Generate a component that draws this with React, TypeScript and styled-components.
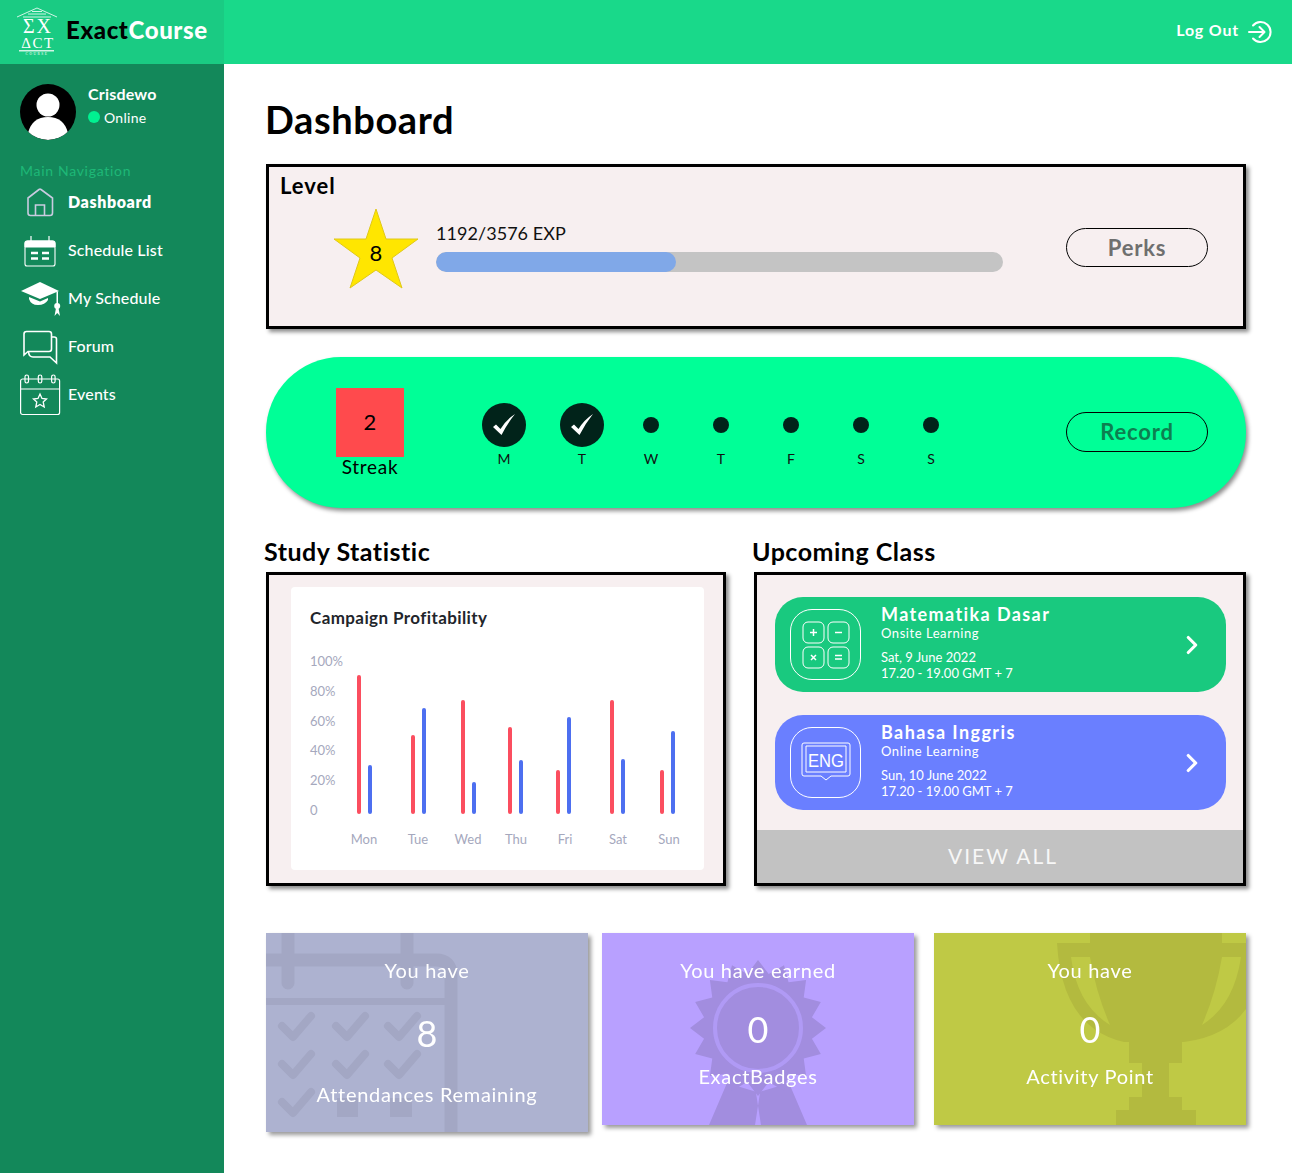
import React from "react";
import styled, { createGlobalStyle } from "styled-components";
import { ChevronRight } from "lucide-react";

const GlobalStyle = createGlobalStyle`
  html, body {
    margin: 0;
    padding: 0;
    background: #ffffff;
    font-family: "Lato", "Noto Sans", sans-serif;
  }
  * {
    box-sizing: border-box;
  }
`;

const navItems = [
  { label: "Dashboard", icon: "home", active: true },
  { label: "Schedule List", icon: "calendar" },
  { label: "My Schedule", icon: "cap" },
  { label: "Forum", icon: "forum" },
  { label: "Events", icon: "events" },
];

const days = [
  { label: "M", done: true, width: 88 },
  { label: "T", done: true, width: 68 },
  { label: "W", width: 70 },
  { label: "T", width: 70 },
  { label: "F", width: 70 },
  { label: "S", width: 70 },
  { label: "S", width: 70 },
];

const bars = [
  { day: "Mon", labelX: 73, redX: 68, redTop: 88, blueX: 79, blueTop: 178 },
  { day: "Tue", labelX: 127, redX: 122, redTop: 148, blueX: 133, blueTop: 121 },
  { day: "Wed", labelX: 177, redX: 172, redTop: 113, blueX: 183, blueTop: 195 },
  { day: "Thu", labelX: 225, redX: 219, redTop: 140, blueX: 230, blueTop: 173 },
  { day: "Fri", labelX: 274, redX: 267, redTop: 183, blueX: 278, blueTop: 130 },
  { day: "Sat", labelX: 327, redX: 321, redTop: 113, blueX: 332, blueTop: 172 },
  { day: "Sun", labelX: 378, redX: 371, redTop: 183, blueX: 382, blueTop: 144 },
];

const yTicks = [
  { label: "100%", y: 79 },
  { label: "80%", y: 109 },
  { label: "60%", y: 139 },
  { label: "40%", y: 168 },
  { label: "20%", y: 198 },
  { label: "0", y: 228 },
];

function NavIcon({ name }: { name: string }) {
  if (name === "home") {
    return (
      <svg width="44" height="36" viewBox="0 0 44 36" fill="none" stroke="#c9cbe0" strokeWidth="1.6">
        <path d="M8 13 L19 4.500 Q20 3.800 21 4.500 L32.500 13 V28 Q32.500 30.500 30 30.500 H10.500 Q8 30.500 8 28 Z" />
        <path d="M15.500 30.500 V20 H24.500 V30.500" />
      </svg>
    );
  }
  if (name === "calendar") {
    return (
      <svg width="44" height="36" viewBox="0 0 44 36" fill="none" stroke="#ffffff">
        <path d="M11 3 V9 M29 3 V9" strokeWidth="1.200" />
        <path d="M5 10.500 Q5 8 7.500 8 H32.500 Q35 8 35 10.500 V14 H5 Z" fill="#ffffff" strokeWidth="1" />
        <rect x="5" y="8" width="30" height="25" rx="2" strokeWidth="1.100" />
        <path d="M11 20 H18 M22 20 H29 M11 25.500 H18 M22 25.500 H29" strokeWidth="2.600" />
      </svg>
    );
  }
  if (name === "cap") {
    return (
      <svg width="44" height="36" viewBox="0 0 44 36" fill="#ffffff">
        <path d="M1 10 L20 1 L39 10 L20 18 Z" />
        <path d="M9 16 L20 20.500 L28 17 V19 Q25 24 18 24 Q11 24 9 18 Z" />
        <path d="M36.500 10.500 H38 V23 H36.500 Z" />
        <circle cx="37.200" cy="25" r="3" />
        <path d="M36 27 L34.500 35 L37.200 32 L40 35 L38.500 27 Z" />
      </svg>
    );
  }
  if (name === "forum") {
    return (
      <svg width="44" height="36" viewBox="0 0 44 36" fill="none" stroke="#ffffff" strokeWidth="1.600">
        <path d="M4 26 V5 Q4 2.500 6.500 2.500 H29 Q31.500 2.500 31.500 5 V20 Q31.500 22.500 29 22.500 H8 Z" />
        <path d="M32 8 H34 Q36.500 8 36.500 10 V34 L30 28 H13 Q9 28 8.500 23" />
      </svg>
    );
  }
  return (
    <svg width="44" height="42" viewBox="0 0 44 42" fill="none" stroke="#ffffff" strokeWidth="1.200">
      <rect x="0.600" y="5" width="39" height="35.500" rx="2" />
      <path d="M0.600 15 H39.600" />
      <rect x="5" y="1" width="3.500" height="8" rx="1.700" />
      <rect x="18.300" y="1" width="3.500" height="8" rx="1.700" />
      <rect x="31.600" y="1" width="3.500" height="8" rx="1.700" />
      <path d="M20 20 L22 24.500 L26.500 25 L23.200 28 L24.200 33 L20 30.500 L15.800 33 L16.800 28 L13.500 25 L18 24.500 Z" strokeWidth="1.300" />
    </svg>
  );
}

function Logo() {
  return (
    <svg width="44" height="50" viewBox="0 0 44 50">
      <path d="M1 10 L21 1 L41 10 M7 10 H35 M12 7 H30 M16 4.500 H26" stroke="#ffffff" strokeWidth="0.800" fill="none" />
      <LogoText x="22" y="26" fontSize="20" letterSpacing="2">ΣX</LogoText>
      <LogoText x="22" y="41" fontSize="15" letterSpacing="1.500">ΔCΤ</LogoText>
      <rect x="3" y="43" width="35" height="1.500" fill="#ffffff" opacity="0.800" />
      <LogoText x="21" y="48" fontSize="3.500" letterSpacing="1.500">COURSE</LogoText>
    </svg>
  );
}

function LogOutIcon() {
  return (
    <svg width="24" height="24" viewBox="0 0 24 24" fill="none" stroke="#ffffff" strokeWidth="2" strokeLinecap="round" strokeLinejoin="round">
      <path d="M5 5.500 A10 10 0 1 1 5 18.500" />
      <path d="M1 12 H16 M11.500 7 L16.500 12 L11.500 17" />
    </svg>
  );
}

function Check() {
  return (
    <svg width="24" height="24" viewBox="0 0 24 24" fill="#ffffff">
      <path d="M1 14 L4 11.500 L8.500 16 Q14 7 23 1 Q15 11 9.500 22 Z" />
    </svg>
  );
}

function MathIcon() {
  return (
    <svg width="48" height="48" viewBox="0 0 48 48" fill="none" stroke="#ffffff" strokeWidth="1">
      <rect x="1" y="1" width="21" height="21" rx="5" />
      <rect x="26" y="1" width="21" height="21" rx="5" />
      <rect x="1" y="26" width="21" height="21" rx="5" />
      <rect x="26" y="26" width="21" height="21" rx="5" />
      <g strokeWidth="1.500">
        <path d="M8 11.500 H15 M11.500 8 V15" />
        <path d="M33 11.500 H40" />
        <path d="M9 34 L14 39 M14 34 L9 39" />
        <path d="M33 34.500 H40 M33 38 H40" />
      </g>
    </svg>
  );
}

function EngIcon() {
  return (
    <svg width="50" height="42" viewBox="0 0 50 42" fill="none" stroke="#ffffff" strokeWidth="1">
      <path d="M3 1 H47 Q49 1 49 3 V32 Q49 34 47 34 H30 L25 38 L20 34 H3 Q1 34 1 32 V3 Q1 1 3 1 Z" />
      <path d="M5 4 H45 V30 H5 Z" />
      <EngText x="25" y="25" fontSize="19" textLength="36" lengthAdjust="spacingAndGlyphs">ENG</EngText>
    </svg>
  );
}

function CalendarMark() {
  const cols = [12, 66, 118];
  const rows = [
    { y: 79, cols },
    { y: 117, cols },
    { y: 155, cols: [12] },
  ];
  return (
    <Watermark width="322" height="199" viewBox="0 0 322 199" fill="none" stroke="#a3a7c4">
      <path d="M-10 27 H170 Q185 27 185 42 V210" strokeWidth="13" />
      <path d="M22 -10 V50 M141 -10 V50" strokeWidth="13" strokeLinecap="round" />
      <path d="M-10 68.500 H185" strokeWidth="7" />
      {rows.map((row) =>
        row.cols.map((x) => (
          <path
            key={`${x}-${row.y}`}
            d={`M${x + 4} ${row.y + 14} L${x + 15} ${row.y + 25} L${x + 33} ${row.y + 4}`}
            strokeWidth="8"
            strokeLinecap="round"
            strokeLinejoin="round"
          />
        ))
      )}
      <rect x="71" y="165" width="21" height="19" fill="#a3a7c4" stroke="none" />
      <rect x="124" y="165" width="22" height="19" fill="#a3a7c4" stroke="none" />
    </Watermark>
  );
}

function BadgeMark() {
  const points: string[] = [];
  for (let i = 0; i < 32; i++) {
    const angle = (Math.PI * i) / 16 - Math.PI / 2;
    const radius = i % 2 === 0 ? 68 : 55;
    points.push(`${156 + radius * Math.cos(angle)},${95 + radius * Math.sin(angle)}`);
  }
  return (
    <Watermark width="312" height="192" viewBox="0 0 312 192">
      <path d="M125 150 L107 192 H153 L158 160 Z M187 150 L205 192 H159 L154 160 Z" fill="#a28ddf" />
      <polygon points={points.join(" ")} fill="#a28ddf" />
      <circle cx="156" cy="95" r="43" fill="none" stroke="#b09af5" strokeWidth="4" />
    </Watermark>
  );
}

function TrophyMark() {
  return (
    <Watermark width="312" height="192" viewBox="0 0 312 192" fill="#b3ba3f">
      <path d="M123 10 H156 V0 H288 V10 H330 V24 Q322 100 250 109 H248 V130 H235 V164 H248 V177 H262 V192 H182 V177 H195 V164 H208 V130 H195 V109 H190 Q128 95 123 10 Z M137 24 Q143 72 176 92 Q162 60 156 24 Z M307 24 H288 Q282 60 268 92 Q300 72 307 24 Z" fillRule="evenodd" />
    </Watermark>
  );
}

export default function App() {
  return (
    <>
      <GlobalStyle />
      <Page>
        <Header>
          <Brand>
            <Logo />
            <BrandName>
              Exact<BrandAccent>Course</BrandAccent>
            </BrandName>
          </Brand>
          <LogOutLink>
            <LogOutText>Log Out</LogOutText>
            <LogOutIcon />
          </LogOutLink>
        </Header>
        <Body>
          <Sidebar>
            <Profile>
              <Avatar>
                <svg width="56" height="56" viewBox="0 0 56 56" fill="#ffffff">
                  <circle cx="28" cy="21" r="11.500" />
                  <path d="M8 49 Q12 33 28 33 Q44 33 48 49 Q38 56 28 56 Q18 56 8 49 Z" />
                </svg>
              </Avatar>
              <ProfileInfo>
                <ProfileName>Crisdewo</ProfileName>
                <ProfileStatus>
                  <StatusDot />
                  Online
                </ProfileStatus>
              </ProfileInfo>
            </Profile>
            <NavTitle>Main Navigation</NavTitle>
            <NavList>
              {navItems.map((item) => (
                <NavRow key={item.label}>
                  <NavIconSlot>
                    <NavIcon name={item.icon} />
                  </NavIconSlot>
                  <NavLabel $active={item.active}>{item.label}</NavLabel>
                </NavRow>
              ))}
            </NavList>
          </Sidebar>
          <Main>
            <PageTitle>Dashboard</PageTitle>
            <LevelCard>
              <LevelTitle>Level</LevelTitle>
              <LevelRow>
                <StarBox>
                  <svg width="86" height="82" viewBox="0 0 86 82">
                    <polygon
                      points="43,1 53,31 85,31 59,50 69,80 43,62 17,80 27,50 1,31 33,31"
                      fill="#ffe600"
                      stroke="#e0c81a"
                      strokeWidth="1"
                    />
                  </svg>
                  <StarNumber>8</StarNumber>
                </StarBox>
                <Progress>
                  <ProgressText>1192/3576 EXP</ProgressText>
                  <ProgressTrack>
                    <ProgressFill style={{ width: `${(1192 / 2816) * 100}%` }} />
                  </ProgressTrack>
                </Progress>
                <OutlineButton $color="#6f6f6f">Perks</OutlineButton>
              </LevelRow>
            </LevelCard>

            <StreakCard>
              <StreakBox>
                <StreakCount>2</StreakCount>
                <StreakLabel>Streak</StreakLabel>
              </StreakBox>
              <DayList>
                {days.map((day, index) => (
                  <DayItem key={index} $width={day.width}>
                    <DayMark>{day.done ? <DayCircle><Check /></DayCircle> : <DayDot />}</DayMark>
                    <DayLabel>{day.label}</DayLabel>
                  </DayItem>
                ))}
              </DayList>
              <OutlineButton $color="#0d7f50">Record</OutlineButton>
            </StreakCard>

            <Columns>
              <Column>
                <SectionTitle $shift={-2}>Study Statistic</SectionTitle>
                <FramedCard>
                  <ChartPanel>
                    <svg width="413" height="283" viewBox="0 0 413 283">
                      <ChartTitle x="19" y="37">Campaign Profitability</ChartTitle>
                      {yTicks.map((tick) => (
                        <ChartLabel key={tick.label} x="19" y={tick.y}>{tick.label}</ChartLabel>
                      ))}
                      {bars.map((bar) => (
                        <g key={bar.day}>
                          <rect x={bar.redX - 2} y={bar.redTop} width="4" height={227 - bar.redTop} rx="2" fill="#fb4e5f" />
                          <rect x={bar.blueX - 2} y={bar.blueTop} width="4" height={227 - bar.blueTop} rx="2" fill="#4d6ff0" />
                          <ChartLabel x={bar.labelX} y="257" textAnchor="middle">{bar.day}</ChartLabel>
                        </g>
                      ))}
                    </svg>
                  </ChartPanel>
                </FramedCard>
              </Column>
              <Column>
                <SectionTitle $shift={-2}>Upcoming Class</SectionTitle>
                <FramedCard>
                  <ClassList>
                    <ClassCard $color="#19c97f">
                      <ClassIcon><MathIcon /></ClassIcon>
                      <ClassInfo>
                        <ClassName>Matematika Dasar</ClassName>
                        <ClassType>Onsite Learning</ClassType>
                        <ClassTime>Sat, 9 June 2022</ClassTime>
                        <ClassTime>17.20 - 19.00 GMT + 7</ClassTime>
                      </ClassInfo>
                      <ChevronRight color="#ffffff" size={30} strokeWidth={2.500} />
                    </ClassCard>
                    <ClassCard $color="#6a7fff">
                      <ClassIcon><EngIcon /></ClassIcon>
                      <ClassInfo>
                        <ClassName>Bahasa Inggris</ClassName>
                        <ClassType>Online Learning</ClassType>
                        <ClassTime>Sun, 10 June 2022</ClassTime>
                        <ClassTime>17.20 - 19.00 GMT + 7</ClassTime>
                      </ClassInfo>
                      <ChevronRight color="#ffffff" size={30} strokeWidth={2.500} />
                    </ClassCard>
                  </ClassList>
                  <ViewAll>VIEW ALL</ViewAll>
                </FramedCard>
              </Column>
            </Columns>

            <StatRow>
              <StatCard $width={322} $height={199} $color="#adb2d0">
                <CalendarMark />
                <StatLabel>You have</StatLabel>
                <StatNumber $top={28}>8</StatNumber>
                <StatLabel $top={26}>Attendances Remaining</StatLabel>
              </StatCard>
              <StatCard $width={312} $height={192} $color="#b8a0ff" $gap={14}>
                <BadgeMark />
                <StatLabel>You have earned</StatLabel>
                <StatNumber $top={24}>0</StatNumber>
                <StatLabel $top={12}>ExactBadges</StatLabel>
              </StatCard>
              <StatCard $width={312} $height={192} $color="#bfc945" $gap={20}>
                <TrophyMark />
                <StatLabel>You have</StatLabel>
                <StatNumber $top={24}>0</StatNumber>
                <StatLabel $top={12}>Activity Point</StatLabel>
              </StatCard>
            </StatRow>
          </Main>
        </Body>
      </Page>
    </>
  );
}

const Page = styled.div`
  width: 1292px;
  height: 1173px;
  display: flex;
  flex-direction: column;
  overflow: hidden;
`;

const Header = styled.header`
  height: 64px;
  flex-shrink: 0;
  display: flex;
  align-items: center;
  justify-content: space-between;
  padding-right: 20px;
  background: #19d98a;
`;

const Brand = styled.div`
  width: 224px;
  height: 64px;
  display: flex;
  align-items: center;
  gap: 6px;
  padding-left: 16px;
  background: #1acb83;
`;

const BrandName = styled.div`
  padding-bottom: 6px;
  font-size: 24px;
  font-weight: 900;
  letter-spacing: 0.6px;
  color: #000000;
`;

const BrandAccent = styled.span`
  color: #ffffff;
`;

const LogoText = styled.text`
  fill: #ffffff;
  text-anchor: middle;
  font-family: "Liberation Serif", serif;
`;

const LogOutLink = styled.div`
  display: flex;
  align-items: center;
  gap: 9px;
`;

const LogOutText = styled.span`
  padding-bottom: 6px;
  font-size: 16px;
  font-weight: 700;
  letter-spacing: 0.8px;
  color: #ffffff;
`;

const Body = styled.div`
  flex: 1;
  display: flex;
`;

const Sidebar = styled.aside`
  width: 224px;
  flex-shrink: 0;
  padding: 20px 0 0 20px;
  background: #13885a;
`;

const Profile = styled.div`
  display: flex;
  align-items: center;
  gap: 12px;
`;

const Avatar = styled.div`
  width: 56px;
  height: 56px;
  border-radius: 50%;
  overflow: hidden;
  background: #000000;
`;

const ProfileInfo = styled.div`
  display: flex;
  flex-direction: column;
  gap: 6px;
  margin-top: -15px;
`;

const ProfileName = styled.div`
  font-size: 16px;
  font-weight: 700;
  letter-spacing: 0.2px;
  color: #ffffff;
`;

const ProfileStatus = styled.div`
  display: flex;
  align-items: center;
  gap: 4px;
  font-size: 14px;
  letter-spacing: 0.3px;
  color: #ffffff;
`;

const StatusDot = styled.span`
  width: 12px;
  height: 12px;
  border-radius: 50%;
  background: #00f191;
`;

const NavTitle = styled.div`
  margin-top: 22px;
  font-size: 14px;
  line-height: 18px;
  letter-spacing: 0.7px;
  color: #1eb877;
`;

const NavList = styled.nav`
  display: flex;
  flex-direction: column;
  margin-top: -3px;
`;

const NavRow = styled.div`
  height: 48px;
  display: flex;
  align-items: center;
`;

const NavIconSlot = styled.div`
  width: 48px;
  display: flex;
  align-items: center;
  margin-top: 4px;
`;

const NavLabel = styled.span<{ $active?: boolean }>`
  font-size: 16px;
  font-weight: ${({ $active }) => ($active ? 800 : 500)};
  letter-spacing: ${({ $active }) => ($active ? "0.6px" : "0.15px")};
  color: #ffffff;
`;

const Main = styled.main`
  flex: 1;
  padding: 33px 46px 0 42px;
`;

const PageTitle = styled.h1`
  margin: 0 0 23px -1px;
  font-size: 38px;
  line-height: 44px;
  font-weight: 700;
  letter-spacing: 0.6px;
  color: #000000;
`;

const LevelCard = styled.section`
  height: 165px;
  padding: 6px 11px;
  border: 3px solid #000000;
  background: #f7eff0;
  box-shadow: 3px 3px 4px rgba(0, 0, 0, 0.45);
`;

const LevelTitle = styled.div`
  font-size: 22px;
  line-height: 26px;
  font-weight: 700;
  letter-spacing: 1px;
  color: #000000;
`;

const StarBox = styled.div`
  position: relative;
  width: 86px;
  height: 82px;
  margin-top: 3px;
`;

const StarNumber = styled.span`
  position: absolute;
  left: 0;
  right: 0;
  top: 31px;
  text-align: center;
  font-size: 22px;
  line-height: 28px;
  color: #000000;
`;

const Progress = styled.div`
  width: 567px;
  margin: 16px 0 0 17px;
`;

const ProgressText = styled.div`
  font-size: 18px;
  line-height: 24px;
  letter-spacing: 0.05px;
  color: #111111;
`;

const ProgressTrack = styled.div`
  height: 20px;
  margin-top: 7px;
  border-radius: 10px;
  background: #c4c4c4;
  overflow: hidden;
`;

const ProgressFill = styled.div`
  height: 100%;
  background: #80a8e8;
  border-radius: 10px;
`;

const OutlineButton = styled.button<{ $color: string }>`
  width: 142px;
  height: 39px;
  margin-left: auto;
  border: 1px solid #000000;
  border-radius: 20px;
  background: transparent;
  font-family: inherit;
  font-size: 22px;
  font-weight: 700;
  letter-spacing: 0.8px;
  color: ${({ $color }) => $color};
`;

const LevelRow = styled.div`
  display: flex;
  align-items: flex-start;
  margin-top: 6px;
  padding-left: 53px;

  ${OutlineButton} {
    margin-top: 23px;
    margin-right: 24px;
  }
`;

const StreakCard = styled.section`
  height: 151px;
  margin-top: 28px;
  display: flex;
  align-items: center;
  padding-left: 70px;
  border-radius: 75px;
  background: #00ff97;
  box-shadow: 2px 3px 4px rgba(0, 0, 0, 0.45);

  ${OutlineButton} {
    height: 40px;
    margin-right: 38px;
    margin-top: -2px;
  }
`;

const StreakBox = styled.div`
  width: 68px;
  margin-top: 2px;
  display: flex;
  flex-direction: column;
  align-items: center;
`;

const StreakCount = styled.div`
  width: 68px;
  height: 69px;
  display: flex;
  align-items: center;
  justify-content: center;
  padding-bottom: 2px;
  background: #ff4a4d;
  font-size: 22px;
  color: #000000;
`;

const StreakLabel = styled.div`
  margin-top: -2px;
  font-size: 19px;
  line-height: 24px;
  letter-spacing: 0.7px;
  color: #000000;
  white-space: nowrap;
`;

const DayList = styled.div`
  display: flex;
  margin-left: 56px;
  margin-top: 6px;
`;

const DayItem = styled.div<{ $width: number }>`
  width: ${({ $width }) => $width}px;
  display: flex;
  flex-direction: column;
  align-items: center;
`;

const DayMark = styled.div`
  height: 44px;
  display: flex;
  align-items: center;
  justify-content: center;
`;

const DayCircle = styled.div`
  width: 44px;
  height: 44px;
  display: flex;
  align-items: center;
  justify-content: center;
  border-radius: 50%;
  background: #01231a;
`;

const DayDot = styled.div`
  width: 16px;
  height: 16px;
  border-radius: 50%;
  background: #01231a;
`;

const DayLabel = styled.div`
  margin-top: 3px;
  font-size: 14px;
  line-height: 18px;
  color: #111111;
`;

const Columns = styled.div`
  display: grid;
  grid-template-columns: 460px 492px;
  column-gap: 28px;
  margin-top: 28px;
`;

const Column = styled.div`
  display: flex;
  flex-direction: column;
`;

const SectionTitle = styled.h2<{ $shift: number }>`
  margin: -1px 0 5px ${({ $shift }) => $shift}px;
  font-size: 25px;
  line-height: 32px;
  font-weight: 700;
  letter-spacing: 0.5px;
  color: #000000;
`;

const FramedCard = styled.section`
  height: 314px;
  display: flex;
  flex-direction: column;
  border: 3px solid #000000;
  background: #f7eff0;
  box-shadow: 3px 3px 4px rgba(0, 0, 0, 0.45);
`;

const ChartPanel = styled.div`
  width: 413px;
  height: 283px;
  margin: 12px 0 0 22px;
  border-radius: 4px;
  background: #ffffff;
`;

const ChartTitle = styled.text`
  font-size: 17px;
  font-weight: 700;
  letter-spacing: 0.4px;
  fill: #22252b;
`;

const ChartLabel = styled.text`
  font-size: 13px;
  fill: #a5a8bd;
`;

const ClassList = styled.div`
  flex: 1;
  display: flex;
  flex-direction: column;
  gap: 23px;
  padding: 22px 17px 0 18px;
`;

const ClassCard = styled.div<{ $color: string }>`
  height: 95px;
  display: flex;
  align-items: center;
  padding: 0 19px 0 15px;
  border-radius: 28px;
  background: ${({ $color }) => $color};
`;

const ClassIcon = styled.div`
  width: 71px;
  height: 71px;
  flex-shrink: 0;
  display: flex;
  align-items: center;
  justify-content: center;
  border: 1px solid #ffffff;
  border-radius: 22px;
`;

const ClassInfo = styled.div`
  flex: 1;
  margin-left: 20px;
  padding-bottom: 2px;
  display: flex;
  flex-direction: column;
  color: #ffffff;
`;

const ClassName = styled.div`
  margin: -1px 0 2px;
  font-size: 18px;
  line-height: 19px;
  font-weight: 700;
  letter-spacing: 1.4px;
`;

const ClassType = styled.div`
  font-size: 13px;
  line-height: 14px;
  margin-bottom: 9px;
  letter-spacing: 0.55px;
`;

const ClassTime = styled.div`
  font-size: 13px;
  line-height: 16px;
  letter-spacing: 0;
`;

const ViewAll = styled.div`
  height: 53px;
  display: flex;
  align-items: center;
  justify-content: center;
  padding: 0 0 2px 6px;
  background: #c2c2c2;
  font-size: 21px;
  letter-spacing: 2px;
  color: #f7f7f7;
`;

const StatRow = styled.div`
  display: flex;
  align-items: flex-start;
  margin-top: 47px;
`;

const StatCard = styled.div<{ $width: number; $height: number; $color: string; $gap?: number }>`
  position: relative;
  flex-shrink: 0;
  width: ${({ $width }) => $width}px;
  height: ${({ $height }) => $height}px;
  margin-left: ${({ $gap }) => $gap ?? 0}px;
  padding-top: 24px;
  display: flex;
  flex-direction: column;
  align-items: center;
  overflow: hidden;
  background: ${({ $color }) => $color};
  filter: drop-shadow(3px 3px 2px rgba(0, 0, 0, 0.4));
`;

const Watermark = styled.svg`
  position: absolute;
  top: 0;
  left: 0;
`;

const StatLabel = styled.div<{ $top?: number }>`
  position: relative;
  margin-top: ${({ $top }) => $top ?? 0}px;
  font-size: 20px;
  line-height: 26px;
  letter-spacing: 0.7px;
  color: #ffffff;
`;

const StatNumber = styled.div<{ $top: number }>`
  position: relative;
  margin-top: ${({ $top }) => $top}px;
  font-size: 36px;
  line-height: 44px;
  color: #ffffff;
`;

const EngText = styled.text`
  fill: #ffffff;
  stroke: none;
  text-anchor: middle;
  font-family: "Liberation Sans", sans-serif;
`;
